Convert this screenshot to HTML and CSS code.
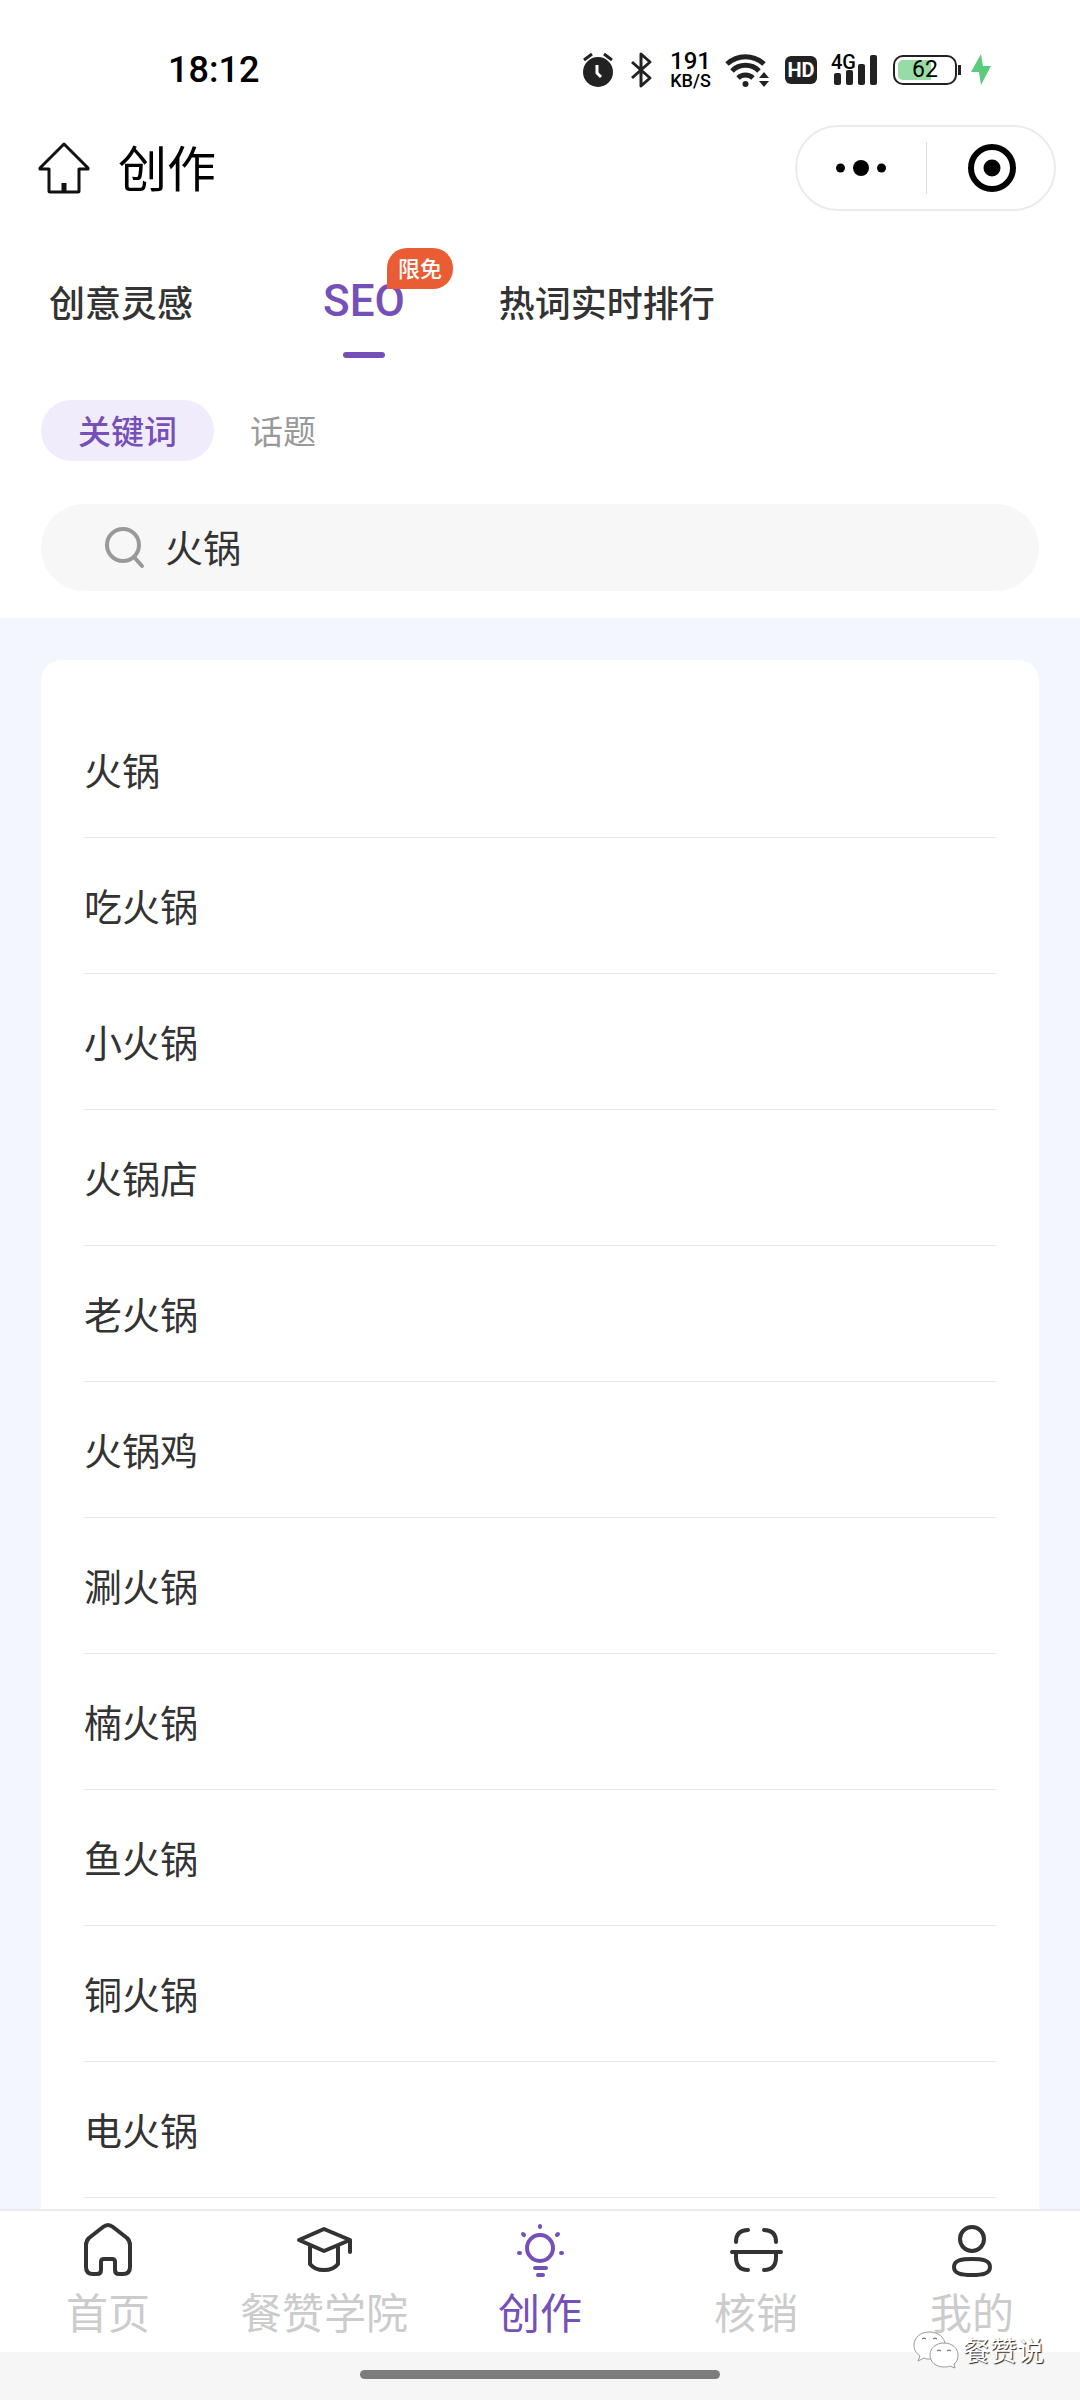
FILE: index.html
```html
<!DOCTYPE html>
<html lang="zh-CN">
  <head>
    <meta charset="UTF-8" />
    <meta name="viewport" content="width=device-width" />
    <title>创作</title>
    <link rel="stylesheet" href="styles.css">
  </head>
  <body>
    <div class="status-bar">
      <time class="clock">18:12</time>
      <div class="status-icons">
        <svg class="alarm" width="32" height="36" viewBox="0 0 32 36">
          <circle cx="16" cy="20" r="15" fill="#222" />
          <path d="M2 8l8-6M30 8l-8-6" stroke="#222" stroke-width="3" />
          <path d="M15 13v8l4 4" fill="none" stroke="#fff" stroke-width="3" />
        </svg>
        <svg class="bluetooth" width="22" height="36" viewBox="0 0 22 36">
          <path d="M2 10l18 16-9 8V2l9 8L2 26" fill="none" stroke="#222" stroke-width="3" stroke-linejoin="round" />
        </svg>
        <div class="net-speed"><b>191</b><span>KB/S</span></div>
        <svg class="wifi" width="46" height="36" viewBox="0 0 46 36">
          <g fill="none" stroke="#222" stroke-width="5">
            <path d="M2 12a27 27 0 0 1 37 0" />
            <path d="M7 19a19 19 0 0 1 27 0" />
            <path d="M13 26a11 11 0 0 1 15 0" />
          </g>
          <circle cx="20.5" cy="32" r="3" fill="#222" />
          <path d="M34 26l5-6 5 6zM34 29l5 6 5-6z" fill="#222" />
        </svg>
        <span class="hd">HD</span>
        <svg class="signal" width="48" height="36" viewBox="0 0 48 36">
          <text x="0" y="17" class="signal-text">4G</text>
          <g fill="#222">
            <rect x="3" y="21" width="7" height="12" rx="2" />
            <rect x="15" y="18" width="7" height="15" rx="2" />
            <rect x="27" y="12" width="7" height="21" rx="2" />
            <rect x="39" y="3" width="7" height="30" rx="2" />
          </g>
        </svg>
        <div class="battery"><span>62</span></div>
        <svg class="bolt" width="20" height="32" viewBox="0 0 20 32">
          <path d="M10 0L0 18h8l2 13L20 12h-8z" fill="#5bcb7c" />
        </svg>
      </div>
    </div>

    <header class="nav-bar">
      <a class="home-link" href="#" aria-label="首页">
        <svg width="52" height="52" viewBox="0 0 52 52">
          <path d="M26 2L2 26v1h9v22q0 1 1 1h28q1 0 1-1V27h9v-1z" fill="none" stroke="#111" stroke-width="3" stroke-linejoin="round" />
          <path d="M26 41v9" stroke="#111" stroke-width="5" />
        </svg>
      </a>
      <h1>创作</h1>
      <div class="capsule">
        <button type="button" aria-label="更多">
          <svg width="52" height="18" viewBox="0 0 52 18">
            <circle cx="5.5" cy="9" r="4.5" /><circle cx="26" cy="9" r="8" /><circle cx="46.5" cy="9" r="4.5" />
          </svg>
        </button>
        <button type="button" aria-label="关闭">
          <svg width="48" height="48" viewBox="0 0 48 48">
            <circle cx="24" cy="24" r="21" fill="none" stroke="#000" stroke-width="6" />
            <circle cx="24" cy="24" r="8.5" />
          </svg>
        </button>
      </div>
    </header>

    <nav class="tabs">
      <a href="#">创意灵感</a>
      <a href="#" class="active">SEO<span class="badge">限免</span></a>
      <a href="#">热词实时排行</a>
    </nav>

    <div class="filters">
      <button type="button" class="active">关键词</button>
      <button type="button">话题</button>
    </div>

    <form class="search">
      <svg width="40" height="42" viewBox="0 0 40 42">
        <g fill="none" stroke="#999" stroke-width="4" stroke-linecap="round">
          <circle cx="18" cy="18" r="16" />
          <path d="M29 30l8 9" />
        </g>
      </svg>
      <input type="text" value="火锅" aria-label="搜索">
    </form>

    <main>
      <ul class="keywords">
        <li>火锅</li>
        <li>吃火锅</li>
        <li>小火锅</li>
        <li>火锅店</li>
        <li>老火锅</li>
        <li>火锅鸡</li>
        <li>涮火锅</li>
        <li>楠火锅</li>
        <li>鱼火锅</li>
        <li>铜火锅</li>
        <li>电火锅</li>
      </ul>
    </main>

    <footer>
      <nav class="tab-bar">
        <a href="#">
          <svg viewBox="0 0 56 56">
            <path d="M23 5q5-4 10 0l14 11q3 3 3 7v22q0 7-7 7h-4q-4 0-4-4v-8q0-3-3-3h-8q-3 0-3 3v8q0 4-4 4h-4q-7 0-7-7V23q0-4 3-7z" />
          </svg>
          首页
        </a>
        <a href="#">
          <svg viewBox="0 0 56 56">
            <path d="M3 18L28 7l26 11-26 11zM54 18v12M14 24v18c6 8 22 8 28 0V24" />
          </svg>
          餐赞学院
        </a>
        <a href="#" class="active">
          <svg viewBox="0 0 56 56">
            <circle cx="28" cy="26" r="13" />
            <path d="M23 46h11M26 53h5M28 4v1M11 12l1 1M46 12l-1 1M7 31h1M50 31h-1" />
          </svg>
          创作
        </a>
        <a href="#">
          <svg viewBox="0 0 56 56">
            <path d="M20 8q-12 0-12 12M36 8q12 0 12 12M4 30h49M8 30v5q0 13 12 13M48 30v5q0 13-12 13" />
          </svg>
          核销
        </a>
        <a href="#">
          <svg viewBox="0 0 56 56">
            <circle cx="28" cy="17" r="12" />
            <path d="M28 37c10 0 18 1 18 8s-8 8-18 8-18-1-18-8 8-8 18-8z" />
          </svg>
          我的
        </a>
      </nav>
      <div class="gesture-bar"></div>
      <div class="watermark">
        <svg width="46" height="40" viewBox="0 0 46 40">
          <g fill="#fff" stroke="#999" stroke-width="1">
            <path d="M16 2C7 2 1 8 1 15c0 5 2 8 6 11l-2 5 6-3c2 1 4 1 6 1 9 0 15-6 15-14S25 2 16 2z" />
            <path d="M31 13c-8 0-14 5-14 12s6 12 14 12c2 0 4 0 6-1l5 2-1-4c3-2 4-5 4-9 0-7-6-12-14-12z" />
          </g>
          <path d="M9 9q2-2 4 0M20 9q2-2 4 0M24 21q2-2 4 0M34 21q2-2 4 0" fill="none" stroke="#555" />
        </svg>
        餐赞说
      </div>
    </footer>
  </body>
</html>
```

FILE: styles.css
```css
:root {
  --primary-color: #7550b8;
  --text-color: #333333;
  --muted-color: #999999;
  --page-bg-color: #f3f6fe;
  --line-color: #ebebeb;
  --gutter: 41px;
}

* {
  box-sizing: border-box;
}

body {
  display: flex;
  flex-direction: column;
  min-height: 100vh;
  margin: 0;
  font-family: "Noto Sans CJK SC", sans-serif;
  color: var(--text-color);
  background-color: #ffffff;
}

a {
  color: inherit;
  text-decoration: none;
}

button {
  padding: 0;
  border: 0;
  background: none;
  font: inherit;
  color: inherit;
}

svg {
  display: block;
  flex: none;
  overflow: visible;
}

/* status bar */
.status-bar {
  display: flex;
  align-items: center;
  justify-content: space-between;
  height: 125px;
  padding: 14px 89px 0 168px;
  font-family: Roboto, sans-serif;
  color: #000000;
}

.clock {
  font-size: 36px;
  font-weight: 500;
  line-height: 44px;
}

.status-icons {
  display: flex;
  align-items: center;
  gap: 14px;
}

.bluetooth {
  margin: 0 4px 0 2px;
}

.net-speed {
  display: flex;
  flex-direction: column;
  align-items: center;
  font-size: 18px;
  font-weight: 500;
  line-height: 18px;
}
.net-speed b {
  font-size: 24px;
  font-weight: 500;
  line-height: 22px;
}

.hd {
  width: 32px;
  border-radius: 6px;
  font-size: 20px;
  font-weight: 700;
  line-height: 28px;
  text-align: center;
  color: #ffffff;
  background-color: #222222;
}

.signal-text {
  font-size: 20px;
  font-weight: 500;
}

.battery {
  position: relative;
  width: 64px;
  padding: 3px;
  border: 2px solid #222222;
  border-radius: 10px;
  font-size: 23px;
  font-weight: 400;
  line-height: 20px;
  text-align: center;
}
.battery span {
  display: block;
  border-radius: 5px;
  background: linear-gradient(to right, #97dca7 62%, transparent 62%);
}
.battery::after {
  content: "";
  position: absolute;
  top: 8px;
  right: -6px;
  width: 3px;
  height: 10px;
  background-color: #222222;
}

/* title bar */
.nav-bar {
  display: flex;
  align-items: center;
  padding: 0 24px 0 38px;
}

h1 {
  flex: 1;
  margin: 0 0 0 28px;
  padding-bottom: 4px;
  font-size: 49px;
  font-weight: 400;
  line-height: 72px;
  color: #000000;
}

.capsule {
  display: grid;
  grid-template-columns: 1fr 1fr;
  align-items: center;
  width: 261px;
  height: 86px;
  border: 2px solid var(--line-color);
  border-radius: 43px;
}
.capsule button {
  display: flex;
  align-items: center;
  justify-content: center;
  height: 52px;
}
.capsule button + button {
  padding-left: 4px;
  border-left: 1px solid #dddddd;
}

/* top tabs */
.tabs {
  display: flex;
  align-items: center;
  padding: 60px 49px 0;
  font-size: 36px;
  font-weight: 500;
  line-height: 60px;
}
.tabs a {
  position: relative;
  padding-bottom: 27px;
}
.tabs .active {
  margin: 0 94px 0 130px;
  font-family: Roboto, "Noto Sans CJK SC", sans-serif;
  font-size: 44px;
  color: var(--primary-color);
}
.tabs .active::after {
  content: "";
  position: absolute;
  bottom: 0;
  left: calc(50% - 21px);
  width: 42px;
  height: 6px;
  border-radius: 3px;
  background-color: var(--primary-color);
}

.badge {
  position: absolute;
  bottom: 69px;
  left: 64px;
  padding: 0 11px 2px;
  border-radius: 20px 20px 20px 0;
  font-family: "Noto Sans CJK SC", sans-serif;
  font-size: 22px;
  line-height: 39px;
  white-space: nowrap;
  color: #ffffff;
  background-color: #ea5c34;
}

/* filters */
.filters {
  display: flex;
  gap: 36px;
  padding: 42px var(--gutter) 0;
  font-size: 33px;
  line-height: 61px;
  color: var(--muted-color);
}
.filters .active {
  padding: 0 37px;
  border-radius: 31px;
  font-weight: 500;
  color: var(--primary-color);
  background-color: #f1ecfc;
}

.search {
  display: flex;
  align-items: center;
  gap: 20px;
  height: 87px;
  margin: 43px var(--gutter) 27px;
  padding: 0 64px;
  border-radius: 44px;
  background-color: #f7f7f7;
}
.search input {
  flex: 1;
  min-width: 0;
  padding: 0 0 4px;
  border: 0;
  outline: 0;
  background: none;
  font: inherit;
  font-size: 38px;
  line-height: 56px;
  color: inherit;
}

/* keyword list */
main {
  display: flex;
  flex: 1;
  padding: 42px var(--gutter) 0;
  background-color: var(--page-bg-color);
}

.keywords {
  flex: 1;
  margin: 0;
  padding: 42px 43px 11px;
  border-radius: 20px 20px 0 0;
  list-style: none;
  font-size: 38px;
  background-color: #ffffff;
}
.keywords li {
  height: 136px;
  border-bottom: 1px solid #e8e8e8;
  line-height: 134px;
}

/* bottom bar */
footer {
  position: relative;
  background-color: #f6f6f6;
}

.tab-bar {
  display: flex;
  height: 143px;
  padding-top: 11px;
  border-top: 2px solid var(--line-color);
  background-color: #ffffff;
}
.tab-bar a {
  display: flex;
  flex: 1;
  flex-direction: column;
  align-items: center;
  gap: 2px;
  font-size: 42px;
  line-height: 62px;
  color: #cccccc;
}
.tab-bar svg {
  width: 56px;
  height: 56px;
  fill: none;
  stroke: var(--text-color);
  stroke-width: 4;
  stroke-linecap: round;
  stroke-linejoin: round;
}
.tab-bar .active {
  color: var(--primary-color);
}
.tab-bar .active svg {
  stroke: var(--primary-color);
}

.gesture-bar {
  width: 33.33%;
  height: 9px;
  margin: 18px auto 21px;
  border-radius: 5px;
  background-color: #7c7c7c;
}

.watermark {
  position: absolute;
  right: 36px;
  bottom: 29px;
  display: flex;
  align-items: center;
  gap: 4px;
  font-size: 27px;
  line-height: 42px;
  color: #ffffff;
  text-shadow: 1px 1px 1px #222222;
}
```
